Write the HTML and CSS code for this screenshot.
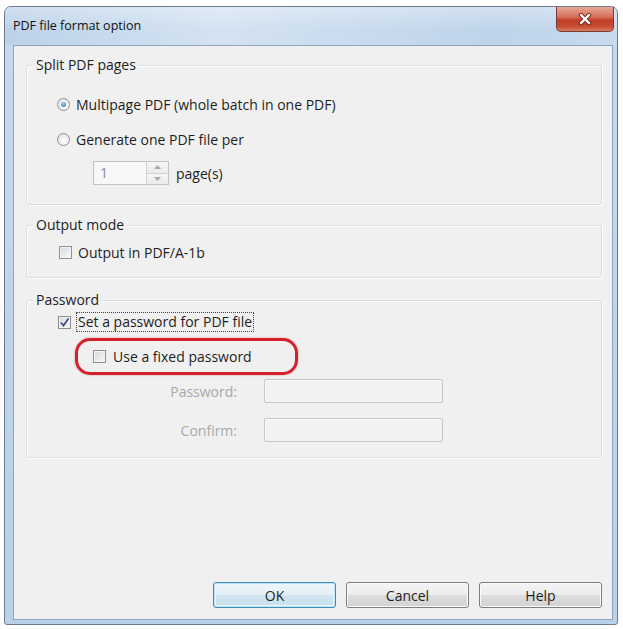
FILE: index.html
```html
<!DOCTYPE html>
<html>
<head>
  <title>PDF file format option</title>
  <link rel="stylesheet" href="styles.css">
</head>
<body>
  <div class="window">
    <div class="titlebar">
      <span class="title">PDF file format option</span>
      <div class="close">
        <svg width="16" height="12" viewBox="0 0 16 12">
          <path d="M4 2 L12 10 M12 2 L4 10" stroke="#7b3025" stroke-width="4.4" stroke-linecap="round"/>
          <path d="M4 2 L12 10 M12 2 L4 10" stroke="#ffffff" stroke-width="2.4" stroke-linecap="round"/>
        </svg>
      </div>
    </div>

    <div class="client">
      <fieldset class="group">
        <legend>Split PDF pages</legend>
        <div class="group-body group-split">
          <div class="option">
            <span class="radio checked"></span>
            <span>Multipage PDF (whole batch in one PDF)</span>
          </div>
          <div class="option option-second">
            <span class="radio"></span>
            <span>Generate one PDF file per</span>
          </div>
          <div class="pages-row">
            <div class="spin">
              <span class="spin-value">1</span>
              <span class="spin-buttons">
                <span class="spin-btn">
                  <svg width="7" height="4" viewBox="0 0 7 4"><path d="M0 4 L3.5 0 L7 4 Z" fill="#a8a8a8"/></svg>
                </span>
                <span class="spin-btn">
                  <svg width="7" height="4" viewBox="0 0 7 4"><path d="M0 0 L3.5 4 L7 0 Z" fill="#a8a8a8"/></svg>
                </span>
              </span>
            </div>
            <span>page(s)</span>
          </div>
        </div>
      </fieldset>

      <fieldset class="group group-gap">
        <legend>Output mode</legend>
        <div class="group-body group-output">
          <div class="option">
            <span class="check"></span>
            <span>Output in PDF/A-1b</span>
          </div>
        </div>
      </fieldset>

      <fieldset class="group group-gap-wide">
        <legend>Password</legend>
        <div class="group-body group-password">
          <div class="option">
            <span class="check">
              <svg width="11" height="11" viewBox="0 0 11 11"><path d="M2 5.5 L4.5 8.5 L9.5 1.5" fill="none" stroke="#3a4f86" stroke-width="1.7"/></svg>
            </span>
            <span class="focused">Set a password for PDF file</span>
          </div>
          <div class="highlight">
            <span class="check"></span>
            <span>Use a fixed password</span>
          </div>
          <div class="field-row">
            <span class="field-label">Password:</span>
            <span class="field-box"></span>
          </div>
          <div class="field-row field-row-second">
            <span class="field-label">Confirm:</span>
            <span class="field-box"></span>
          </div>
        </div>
      </fieldset>

      <div class="buttons">
        <button class="btn btn-default">OK</button>
        <button class="btn">Cancel</button>
        <button class="btn">Help</button>
      </div>
    </div>
  </div>
</body>
</html>
```

FILE: styles.css
```css
body {
  margin: 0;
  padding: 0;
  background-color: #fff;
  font-family: "Open Sans", "Noto Sans", sans-serif;
  font-size: 14px;
  color: #1e1e1e;
}

.window {
  margin: 6px 0 0 4px;
  width: 614px;
  height: 619px;
  box-sizing: border-box;
  border: 1px solid #6c7b8c;
  border-radius: 7px 7px 3px 3px;
  background: linear-gradient(to bottom, #c6d9ee, #b9d0e9);
  display: flex;
  flex-direction: column;
}

.titlebar {
  height: 38px;
  flex: none;
  display: flex;
  justify-content: space-between;
  align-items: flex-start;
  padding-left: 8px;
  border-radius: 6px 6px 0 0;
  background:
    linear-gradient(to bottom, rgba(255, 255, 255, 0.3), rgba(255, 255, 255, 0) 60%),
    linear-gradient(to right, #bcd2e9, #d4e3f2 35%, #cadcef 55%, #bfd4ea 80%, #c7daee);
}

.title {
  line-height: 38px;
  font-size: 12.5px;
  color: #111;
}

.close {
  width: 58px;
  height: 25px;
  margin-right: 3px;
  box-sizing: border-box;
  border: 1px solid #7a3b33;
  border-top: none;
  border-radius: 0 0 5px 5px;
  background: linear-gradient(to bottom, #e7a797 0%, #d6735b 40%, #c23f27 55%, #c44a30 80%, #d87c63 100%);
  display: flex;
  align-items: center;
  justify-content: center;
}

.client {
  flex: 1;
  margin: 0 4px 4px 8px;
  border: 1px solid #8ea5be;
  background-color: #f0f0f0;
  padding: 10px 10px 11px 12px;
  display: flex;
  flex-direction: column;
}

.group {
  margin: 0;
  padding: 0;
  border: 1px solid #d5dfe5;
  border-radius: 3px;
  box-shadow: inset 1px 1px 0 #fff, 1px 1px 0 #fff;
  min-inline-size: 0;
}

.group legend {
  margin-left: 6px;
  padding: 0 3px;
  line-height: 18px;
  background-color: #f0f0f0;
}

.group-gap {
  margin-top: 11px;
}

.group-gap-wide {
  margin-top: 13px;
}

.group-split {
  padding: 20px 0 19px 30px;
}

.group-output {
  padding: 8px 0 15px 32px;
}

.group-password {
  padding: 3px 0 15px 31px;
}

.option {
  display: flex;
  align-items: center;
  gap: 6px;
  height: 20px;
}

.option-second {
  margin-top: 15px;
}

.radio {
  width: 13px;
  height: 13px;
  box-sizing: border-box;
  border: 1px solid #8e8f8f;
  border-radius: 50%;
  background: radial-gradient(circle at 60% 65%, #ffffff, #dcdde0);
  display: flex;
  align-items: center;
  justify-content: center;
}

.radio.checked::after {
  content: "";
  width: 5px;
  height: 5px;
  border-radius: 50%;
  background: radial-gradient(circle at 40% 35%, #a6d2f5, #2a64ad);
}

.check {
  width: 13px;
  height: 13px;
  box-sizing: border-box;
  border: 1px solid #8e8f8f;
  background: linear-gradient(135deg, #d6d8dc, #fafafa);
  box-shadow: inset 0 0 0 1px #f4f4f4;
  display: flex;
  align-items: center;
  justify-content: center;
}

.pages-row {
  display: flex;
  align-items: center;
  gap: 7px;
  margin-top: 12px;
  padding-left: 36px;
  height: 24px;
}

.spin {
  width: 76px;
  height: 24px;
  box-sizing: border-box;
  border: 1px solid #c3c3c3;
  background-color: #f7f7f7;
  display: flex;
  justify-content: space-between;
}

.spin-value {
  padding-left: 6px;
  line-height: 22px;
  color: #8d8d8d;
}

.spin-buttons {
  width: 21px;
  display: flex;
  flex-direction: column;
  border-left: 1px solid #d0d0d0;
}

.spin-btn {
  flex: 1;
  display: flex;
  align-items: center;
  justify-content: center;
  background: linear-gradient(to bottom, #f6f6f6, #ebebeb);
}

.spin-btn + .spin-btn {
  border-top: 1px solid #d0d0d0;
}

.focused {
  outline: 1px dotted #444;
  padding: 0 1px;
  line-height: 18px;
}

.highlight {
  width: 223px;
  height: 37px;
  box-sizing: border-box;
  margin: 6px 0 0 17px;
  padding-left: 15px;
  border: 3px solid #d3202b;
  border-radius: 15px;
  display: flex;
  align-items: center;
  gap: 7px;
  box-shadow: 0 0 2px rgba(211, 32, 43, 0.5);
}

.field-row {
  display: flex;
  align-items: center;
  gap: 27px;
  margin-top: 4px;
  height: 24px;
}

.field-row-second {
  margin-top: 15px;
}

.field-label {
  width: 179px;
  text-align: right;
  color: #a8a8a8;
}

.field-box {
  width: 179px;
  height: 24px;
  box-sizing: border-box;
  border: 1px solid #c6c6c6;
  border-radius: 2px;
  background-color: #f2f2f2;
  box-shadow: inset 1px 1px 0 #fafafa;
}

.buttons {
  margin-top: auto;
  display: flex;
  justify-content: flex-end;
  gap: 10px;
}

.btn {
  width: 123px;
  height: 26px;
  border: 1px solid #7d7d7d;
  border-radius: 3px;
  background: linear-gradient(to bottom, #f4f4f4 0%, #ececec 50%, #dedede 50%, #d2d2d2 100%);
  box-shadow: inset 0 0 0 1px #fbfbfb;
  font-family: "Open Sans", "Noto Sans", sans-serif;
  font-size: 14px;
  color: #1e1e1e;
  padding: 0;
}

.btn-default {
  border-color: #3f8cb4;
  background: linear-gradient(to bottom, #eef6fa 0%, #e3eff6 50%, #d3e6f1 50%, #c8dfed 100%);
  box-shadow: inset 0 0 0 1px #bfe3f5, inset 0 0 0 2px #e8f5fc;
}
```
